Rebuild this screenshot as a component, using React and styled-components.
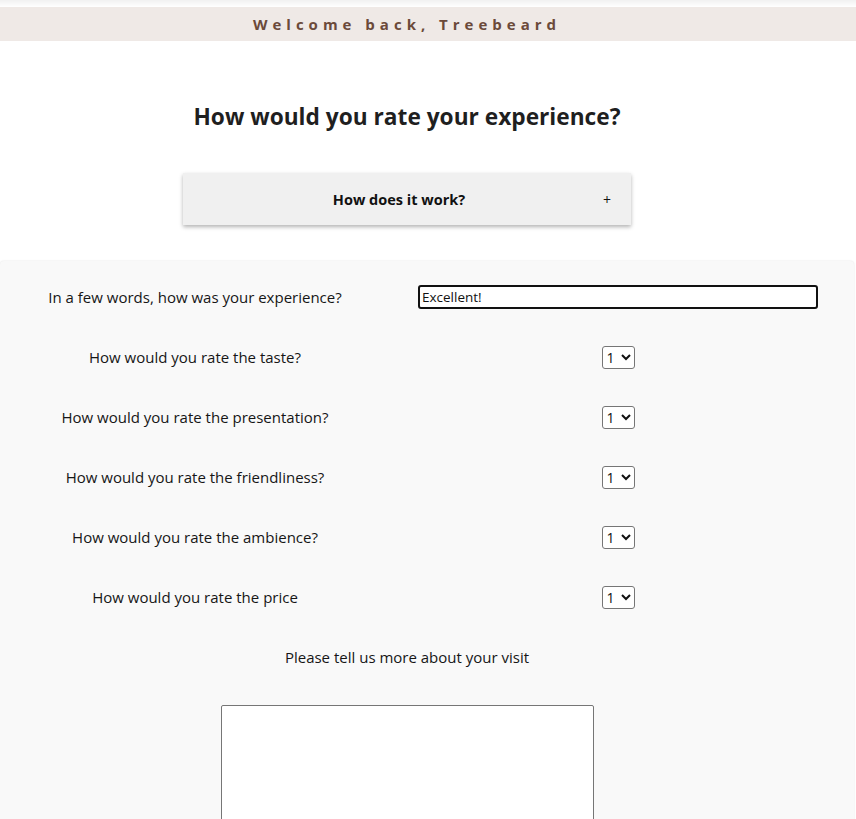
import React from "react";
import styled, { createGlobalStyle } from "styled-components";

const GlobalStyle = createGlobalStyle`
  body {
    margin: 0;
    background: #ffffff;
    font-family: "Open Sans", "Noto Sans", sans-serif;
    color: #1f1f1f;
  }
`;

const TopEdge = styled.div`
  height: 7px;
  background: linear-gradient(#f1f1f1, #ffffff);
`;

const Banner = styled.div`
  height: 34px;
  background: #efe9e6;
  display: flex;
  align-items: center;
  justify-content: center;
  padding-right: 42px;
  font-size: 15px;
  font-weight: 700;
  letter-spacing: 5px;
  color: #6b4a3a;
`;

const Main = styled.div`
  width: 814px;
  display: flex;
  flex-direction: column;
  align-items: center;
`;

const Heading = styled.h1`
  margin: 60px 0 0;
  font-size: 22.7px;
  line-height: 32px;
  font-weight: 700;
  color: #1f1f1f;
`;

const Accordion = styled.div`
  margin-top: 40px;
  width: 448px;
  height: 52px;
  background: #f0f0f0;
  box-shadow: 0 2px 4px rgba(0, 0, 0, 0.3);
  display: flex;
  align-items: center;
  padding: 0 20px;
  box-sizing: border-box;
  font-size: 14.5px;
  font-weight: 700;
  color: #111;
`;

const AccordionTitle = styled.span`
  flex: 1;
  text-align: center;
  padding-right: 8px;
`;

const Plus = styled.span`
  font-weight: 400;
  font-size: 14px;
`;

const Card = styled.form`
  margin-top: 36px;
  width: 854px;
  background: #f9f9f9;
  border-radius: 4px;
  box-shadow: 0 0 2px rgba(0, 0, 0, 0.12);
  padding-top: 6px;
  min-height: 600px;
`;

const Row = styled.div`
  display: grid;
  grid-template-columns: 390px 456px;
  height: 60px;
  align-items: center;
`;

const Label = styled.label`
  text-align: center;
  font-size: 15px;
  color: #161616;
`;

const Cell = styled.div`
  display: flex;
  justify-content: center;
`;

const TextInput = styled.input`
  width: 400px;
  height: 24px;
  box-sizing: border-box;
  border: 2px solid #111;
  border-radius: 3px;
  padding: 0 2px;
  font-family: "Open Sans", "Noto Sans", sans-serif;
  font-size: 13.5px;
  color: #111;
  outline: none;
`;

const Select = styled.select`
  width: 33px;
  height: 23px;
  font-family: "Open Sans", "Noto Sans", sans-serif;
  font-size: 14px;
  border: 1px solid #767676;
  border-radius: 3px;
  background: #fff;
  color: #111;
  padding: 0;
`;

const Center = styled.div`
  width: 814px;
  display: flex;
  flex-direction: column;
  align-items: center;
`;

const CenterLabel = styled.label`
  height: 60px;
  display: flex;
  align-items: center;
  font-size: 15px;
  color: #161616;
`;

const TextArea = styled.textarea`
  margin-top: 18px;
  width: 373px;
  height: 160px;
  box-sizing: border-box;
  border: 1px solid #767676;
  border-radius: 2px;
  resize: none;
`;

const ratings = ["taste?", "presentation?", "friendliness?", "ambience?", "price"];

export default function App() {
  return (
    <>
      <GlobalStyle />
      <TopEdge />
      <Banner>Welcome back, Treebeard</Banner>
      <Main>
        <Heading>How would you rate your experience?</Heading>
        <Accordion>
          <AccordionTitle>How does it work?</AccordionTitle>
          <Plus>+</Plus>
        </Accordion>
      </Main>
      <Card>
        <Row>
          <Label>In a few words, how was your experience?</Label>
          <Cell>
            <TextInput defaultValue="Excellent!" />
          </Cell>
        </Row>
        {ratings.map((r) => (
          <Row key={r}>
            <Label>How would you rate the {r}</Label>
            <Cell>
              <Select defaultValue="1">
                {[1, 2, 3, 4, 5].map((n) => (
                  <option key={n}>{n}</option>
                ))}
              </Select>
            </Cell>
          </Row>
        ))}
        <Center>
          <CenterLabel>Please tell us more about your visit</CenterLabel>
          <TextArea />
        </Center>
      </Card>
    </>
  );
}
